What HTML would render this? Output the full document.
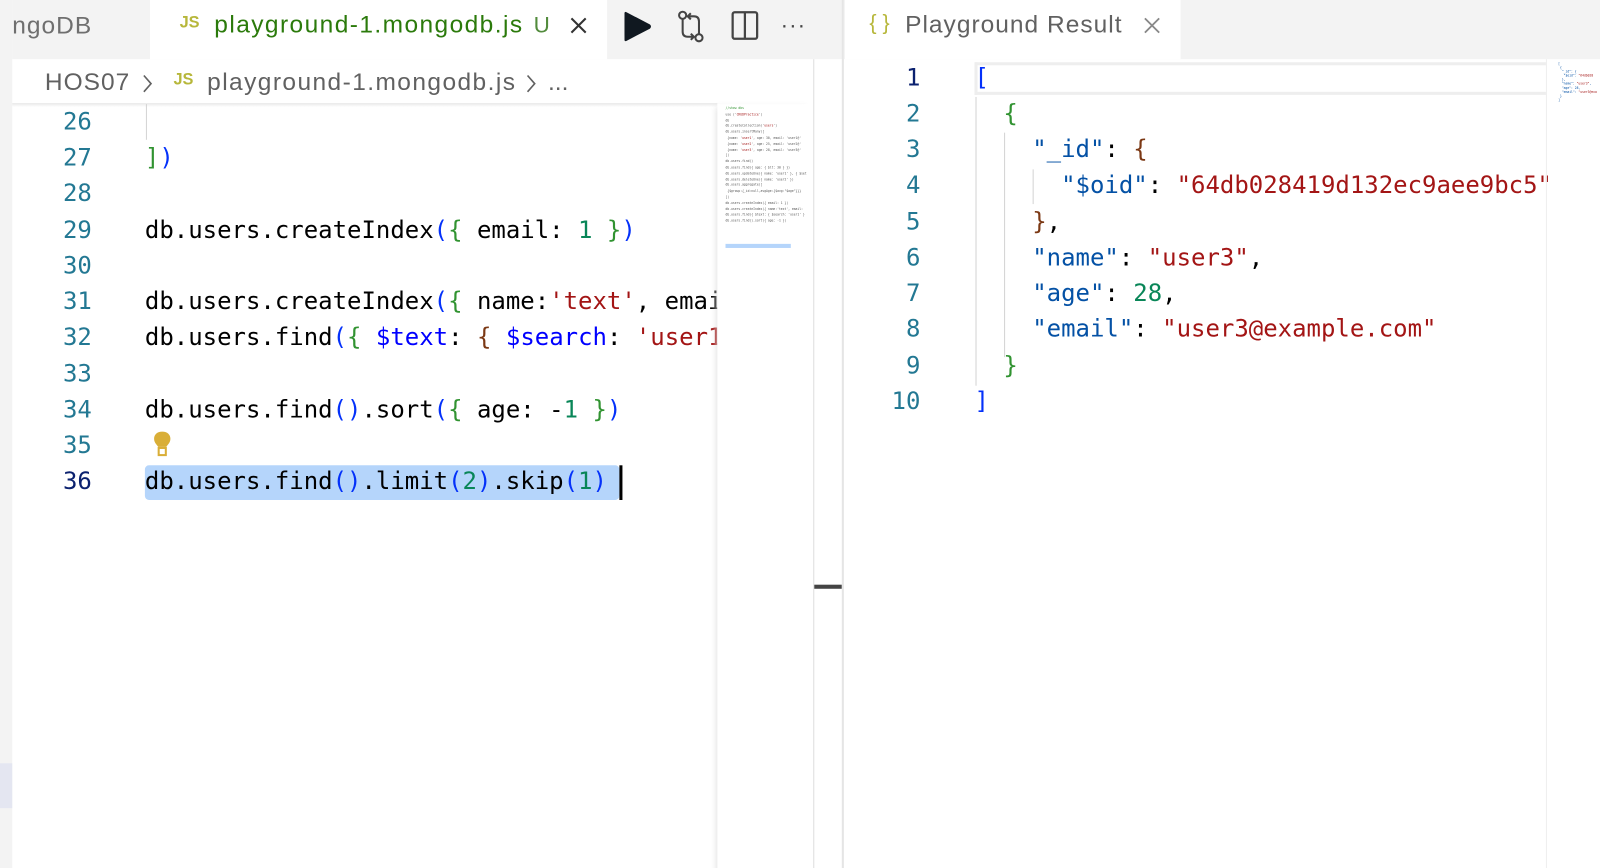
<!DOCTYPE html>
<html><head><meta charset="utf-8"><style>
*{margin:0;padding:0;box-sizing:border-box}
body{width:1600px;height:868px;overflow:hidden;background:#fff;position:relative;font-family:"Liberation Sans",sans-serif}
#w{position:absolute;left:0;top:0;width:1568px;height:851px;transform:scale(1.0204);transform-origin:0 0;overflow:hidden}
.abs{position:absolute}
.mono{font-family:"DejaVu Sans Mono","Liberation Mono",monospace;font-size:23.5px;white-space:pre}
.ln{position:absolute;width:60px;text-align:right;color:#237893}
.code{position:absolute;color:#000}
.b{color:#0431fa}.g{color:#319331}.br{color:#7b3814}.s{color:#a31515}.n{color:#098658}.k{color:#0451a5}.v{color:#0000ff}
.guide{position:absolute;width:1px;background:#d3d3d3}
</style></head><body><div id="w">
<div class="abs" style="left:0;top:0;width:12px;height:868px;background:#f3f3f3"></div>
<div class="abs" style="left:0;top:748px;width:12px;height:44px;background:#e4e6f1"></div>
<div class="abs" style="left:12px;top:0;width:814px;height:58px;background:#f3f3f3"></div>
<div class="abs" style="left:12px;top:12px;font-size:24px;color:#6f6f6f;letter-spacing:1px">ngoDB</div>
<div class="abs" style="left:147px;top:0;width:448px;height:58px;background:#fff"></div>
<div class="abs" style="left:176px;top:14px;font-size:16px;font-weight:bold;color:#b7b73b">JS</div>
<div class="abs" style="left:210px;top:11px;font-size:24px;color:#2b7a0b;letter-spacing:1.4px">playground-1.mongodb.js</div>
<div class="abs" style="left:523px;top:12px;font-size:22px;color:#528b3c">U</div>
<svg class="abs" style="left:557px;top:15px" width="20" height="20" viewBox="0 0 20 20"><path d="M3 3L17 17M17 3L3 17" stroke="#333" stroke-width="2"/></svg>
<svg class="abs" style="left:610px;top:10px" width="30" height="32" viewBox="0 0 30 32"><path d="M2 3Q2 1 4 2L27 14Q29 16 27 18L4 30Q2 31 2 29Z" fill="#101820"/></svg>
<svg class="abs" style="left:661px;top:9px" width="32" height="34" viewBox="0 0 32 34"><g fill="none" stroke="#444" stroke-width="2"><circle cx="8" cy="6" r="3.5"/><circle cx="24" cy="28" r="3.5"/><path d="M8 10V22Q8 27 13 27H19M16 24L19 27L16 30"/><path d="M24 24V12Q24 7 19 7H13M16 4L13 7L16 10"/></g></svg>
<svg class="abs" style="left:716px;top:10px" width="28" height="30" viewBox="0 0 28 30"><rect x="2" y="2" width="24" height="26" rx="2" fill="none" stroke="#444" stroke-width="2.2"/><path d="M14 2V28" stroke="#444" stroke-width="2.2"/></svg>
<div class="abs" style="left:765px;top:12px;font-size:22px;color:#444;letter-spacing:1px">···</div>
<div class="abs" style="left:44px;top:67px;font-size:24px;color:#616161;letter-spacing:1px">HOS07</div>
<svg class="abs" style="left:138px;top:72px" width="12" height="20" viewBox="0 0 12 20"><path d="M3 2L10 10L3 18" fill="none" stroke="#616161" stroke-width="1.6"/></svg>
<div class="abs" style="left:170px;top:70px;font-size:16px;font-weight:bold;color:#b7b73b">JS</div>
<div class="abs" style="left:203px;top:67px;font-size:24px;color:#616161;letter-spacing:1.4px">playground-1.mongodb.js</div>
<svg class="abs" style="left:514px;top:72px" width="12" height="20" viewBox="0 0 12 20"><path d="M3 2L10 10L3 18" fill="none" stroke="#616161" stroke-width="1.6"/></svg>
<div class="abs" style="left:537px;top:67px;font-size:24px;color:#616161">...</div>
<div class="abs" style="left:12px;top:101px;width:691px;height:4px;background:linear-gradient(#e8e8e8,#fff)"></div>
<div class="guide" style="left:143px;top:102px;height:35px"></div>
<div class="mono">
<div class="ln" style="left:30px;top:105px">26</div>
<div class="ln" style="left:30px;top:140px">27</div>
<div class="ln" style="left:30px;top:175px">28</div>
<div class="ln" style="left:30px;top:211px">29</div>
<div class="ln" style="left:30px;top:246px">30</div>
<div class="ln" style="left:30px;top:281px">31</div>
<div class="ln" style="left:30px;top:316px">32</div>
<div class="ln" style="left:30px;top:352px">33</div>
<div class="ln" style="left:30px;top:387px">34</div>
<div class="ln" style="left:30px;top:422px">35</div>
<div class="ln" style="left:30px;top:457px;color:#0b216f">36</div>
<div class="abs" style="left:142px;top:456px;width:465px;height:34px;background:#b5d5fb;border-radius:4px"></div>
<div class="abs" style="left:607px;top:456px;width:3px;height:34px;background:#000"></div>
<div style="position:absolute;left:142px;top:0;width:561px;height:868px;overflow:hidden">
<div class="code" style="left:0;top:140px"><span class="g">]</span><span class="b">)</span></div>
<div class="code" style="left:0;top:211px">db.users.createIndex<span class="b">(</span><span class="g">{</span> email: <span class="n">1</span> <span class="g">}</span><span class="b">)</span></div>
<div class="code" style="left:0;top:281px">db.users.createIndex<span class="b">(</span><span class="g">{</span> name:<span class="s">'text'</span>, email: <span class="n">1</span> <span class="g">}</span><span class="b">)</span></div>
<div class="code" style="left:0;top:316px">db.users.find<span class="b">(</span><span class="g">{</span> <span class="v">$text</span>: <span class="br">{</span> <span class="v">$search</span>: <span class="s">'user1'</span> <span class="br">}</span> <span class="g">}</span><span class="b">)</span></div>
<div class="code" style="left:0;top:387px">db.users.find<span class="b">()</span>.sort<span class="b">(</span><span class="g">{</span> age: -<span class="n">1</span> <span class="g">}</span><span class="b">)</span></div>
<div class="code" style="left:0;top:457px">db.users.find<span class="b">()</span>.limit<span class="b">(</span><span class="n">2</span><span class="b">)</span>.skip<span class="b">(</span><span class="n">1</span><span class="b">)</span></div>
</div>
</div>
<svg class="abs" style="left:149px;top:422px" width="20" height="26" viewBox="0 0 20 26"><path d="M10 1C5 1 2 4 2 8C2 12 5 14 6 16H14C15 14 18 12 18 8C18 4 15 1 10 1Z" fill="#d9ae37"/><rect x="6.5" y="17" width="7" height="7" fill="none" stroke="#d9ae37" stroke-width="2"/></svg>
<div class="abs" style="left:703px;top:102px;width:94px;height:766px;background:#fff;box-shadow:-4px 0 6px -3px #ddd"></div>
<div class="abs" style="left:711px;top:104px;width:85px;height:140px;font-size:3px;line-height:5.8px;color:#555;font-family:monospace;white-space:pre;overflow:hidden"><span style="color:#319331">//show dbs</span>
use ('<span class="s">CRUDPractice</span>')
db
db.createCollection('<span class="s">users</span>')
db.users.insertMany([
 {name: '<span class="s">user1</span>', age: 30, email: 'user1@'
 {name: '<span class="s">user2</span>', age: 25, email: 'user2@'
 {name: '<span class="s">user3</span>', age: 28, email: 'user3@'
])
db.users.find()
db.users.find({ age: { $lt: 30 } })
db.users.updateOne({ name: 'user1' }, { $set
db.users.deleteOne({ name: 'user2' })
db.users.aggregate([
 {$group:{_id:null,avgAge:{$avg:"$age"}}}
])
db.users.createIndex({ email: 1 })
db.users.createIndex({ name:'text', email:
db.users.find({ $text: { $search: 'user1' }
db.users.find().sort({ age: -1 })</div>
<div class="abs" style="left:711px;top:239px;width:64px;height:4px;background:#b5d5fb"></div>
<div class="abs" style="left:797px;top:58px;width:1px;height:810px;background:#ddd"></div>
<div class="abs" style="left:798px;top:573px;width:27px;height:4px;background:#444"></div>
<div class="abs" style="left:825px;top:0;width:2px;height:868px;background:#e5e5e5"></div>
<div class="abs" style="left:827px;top:0;width:773px;height:58px;background:#f3f3f3"></div>
<div class="abs" style="left:828px;top:0;width:329px;height:58px;background:#fff"></div>
<div class="abs" style="left:852px;top:11px;font-size:21px;color:#b7b73b">{ }</div>
<div class="abs" style="left:887px;top:11px;font-size:24px;color:#616161;letter-spacing:1px">Playground Result</div>
<svg class="abs" style="left:1119px;top:15px" width="20" height="20" viewBox="0 0 20 20"><path d="M3 3L17 17M17 3L3 17" stroke="#888" stroke-width="1.8"/></svg>
<div class="abs" style="left:955px;top:61px;width:560px;height:32px;border:3px solid #eee;border-right:none"></div>
<div class="guide" style="left:956px;top:95px;height:283px"></div>
<div class="guide" style="left:984px;top:130px;height:220px"></div>
<div class="guide" style="left:1012px;top:166px;height:34px"></div>
<div class="mono">
<div class="ln" style="left:842px;top:62px;color:#0b216f">1</div>
<div class="ln" style="left:842px;top:97px">2</div>
<div class="ln" style="left:842px;top:132px">3</div>
<div class="ln" style="left:842px;top:167px">4</div>
<div class="ln" style="left:842px;top:203px">5</div>
<div class="ln" style="left:842px;top:238px">6</div>
<div class="ln" style="left:842px;top:273px">7</div>
<div class="ln" style="left:842px;top:308px">8</div>
<div class="ln" style="left:842px;top:344px">9</div>
<div class="ln" style="left:842px;top:379px">10</div>
<div style="position:absolute;left:955px;top:0;width:562px;height:868px;overflow:hidden">
<div class="code b" style="left:0;top:62px">[</div>
<div class="code" style="left:0;top:97px">  <span class="g">{</span></div>
<div class="code" style="left:0;top:132px">    <span class="k">"_id"</span>: <span class="br">{</span></div>
<div class="code" style="left:0;top:167px">      <span class="k">"$oid"</span>: <span class="s">"64db028419d132ec9aee9bc5"</span></div>
<div class="code" style="left:0;top:203px">    <span class="br">}</span>,</div>
<div class="code" style="left:0;top:238px">    <span class="k">"name"</span>: <span class="s">"user3"</span>,</div>
<div class="code" style="left:0;top:273px">    <span class="k">"age"</span>: <span class="n">28</span>,</div>
<div class="code" style="left:0;top:308px">    <span class="k">"email"</span>: <span class="s">"user3@example.com"</span></div>
<div class="code" style="left:0;top:344px">  <span class="g">}</span></div>
<div class="code b" style="left:0;top:379px">]</div>
</div>
</div>
<div class="abs" style="left:1515px;top:58px;width:1px;height:810px;background:#eee"></div>
<div class="abs" style="left:1527px;top:60px;width:73px;height:40px;font-size:3px;line-height:4px;color:#0451a5;font-family:monospace;white-space:pre">[
 {
  "_id": {
   "$oid": <span class="s">"64db028</span>
  },
  "name": <span class="s">"user3"</span>,
  "age": 28,
  "email": <span class="s">"user3@exa</span>
 }
]</div>
</div></body></html>
